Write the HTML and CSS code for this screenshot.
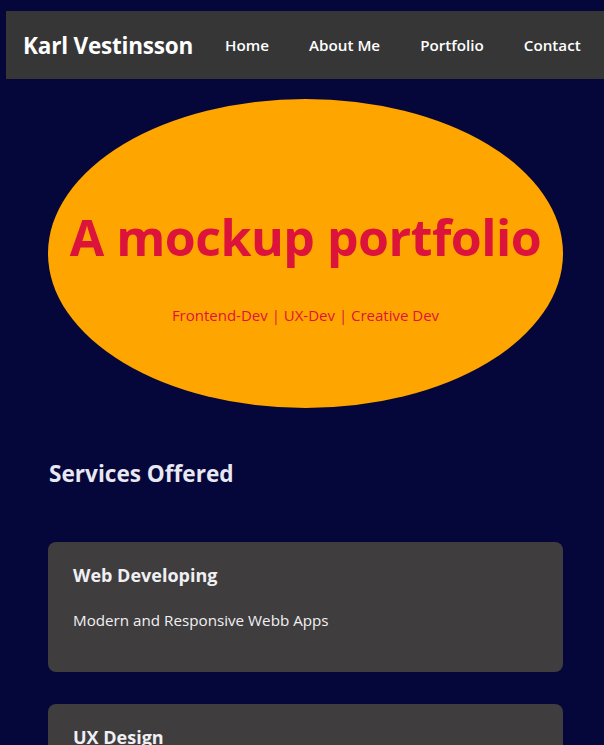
FILE: index.html
```html
<!DOCTYPE html>
<html lang="en">
<head>
<meta charset="utf-8">
<title>Karl Vestinsson</title>
<link rel="stylesheet" href="styles.css">
</head>
<body>
<nav class="topnav">
  <div class="brand">Karl Vestinsson</div>
  <ul class="links">
    <li><a href="#">Home</a></li>
    <li><a href="#">About Me</a></li>
    <li><a href="#">Portfolio</a></li>
    <li><a href="#">Contact</a></li>
  </ul>
</nav>
<main class="content">
  <section class="hero">
    <h1 class="hero-title">A mockup portfolio</h1>
    <p class="hero-sub">Frontend-Dev | UX-Dev | Creative Dev</p>
  </section>
  <h2 class="section-title">Services Offered</h2>
  <div class="cards">
    <article class="card">
      <h3 class="card-title">Web Developing</h3>
      <p class="card-text">Modern and Responsive Webb Apps</p>
    </article>
    <article class="card">
      <h3 class="card-title">UX Design</h3>
      <p class="card-text">User friendly interfaces</p>
    </article>
  </div>
</main>
</body>
</html>
```
FILE: styles.css
```css
html, body {
  margin: 0;
  padding: 0;
}
body {
  background: #05063a;
  font-family: "Open Sans", "Noto Sans", sans-serif;
  color: #ececf2;
  overflow: hidden;
}
.topnav {
  margin: 11px 0 0 6px;
  height: 68px;
  background: #363636;
  display: flex;
  align-items: center;
  padding-left: 17px;
  white-space: nowrap;
}
.brand {
  flex-shrink: 0;
  font-size: 22.5px;
  font-weight: 700;
  color: #ffffff;
  letter-spacing: -0.2px;
  margin-right: 12px;
}
.links {
  flex-shrink: 0;
  display: flex;
  list-style: none;
  margin: 0;
  padding: 0;
}
.links li {
  flex-shrink: 0;
}
.links a {
  display: block;
  padding: 0 20px;
  color: #ffffff;
  text-decoration: none;
  font-size: 15.2px;
  font-weight: 600;
  letter-spacing: 0;
}
.content {
  margin-left: 48px;
  width: 515px;
}
.hero {
  margin-top: 20px;
  height: 309px;
  background: #ffa500;
  border-radius: 50%;
  text-align: center;
  padding-top: 105px;
  box-sizing: border-box;
}
.hero-title {
  margin: 0;
  font-size: 50px;
  line-height: 67px;
  font-weight: 700;
  color: #dc143c;
  letter-spacing: -0.5px;
}
.hero-sub {
  margin: 34px 0 0;
  font-size: 15px;
  line-height: 20px;
  color: #dc143c;
}
.section-title {
  margin: 50px 0 0 1px;
  font-size: 22.6px;
  line-height: 32px;
  font-weight: 700;
  color: #e8e8f2;
}
.cards {
  margin-top: 52px;
  display: flex;
  flex-direction: column;
  gap: 32px;
}
.card {
  background: #3f3d3d;
  border-radius: 8px;
  padding: 21px 25px 41px;
}
.card-title {
  margin: 0;
  font-size: 18px;
  line-height: 24px;
  font-weight: 700;
  color: #f0f0f4;
}
.card-text {
  margin: 22px 0 0;
  font-size: 15.2px;
  line-height: 22px;
  color: #f0f0f4;
}
```
